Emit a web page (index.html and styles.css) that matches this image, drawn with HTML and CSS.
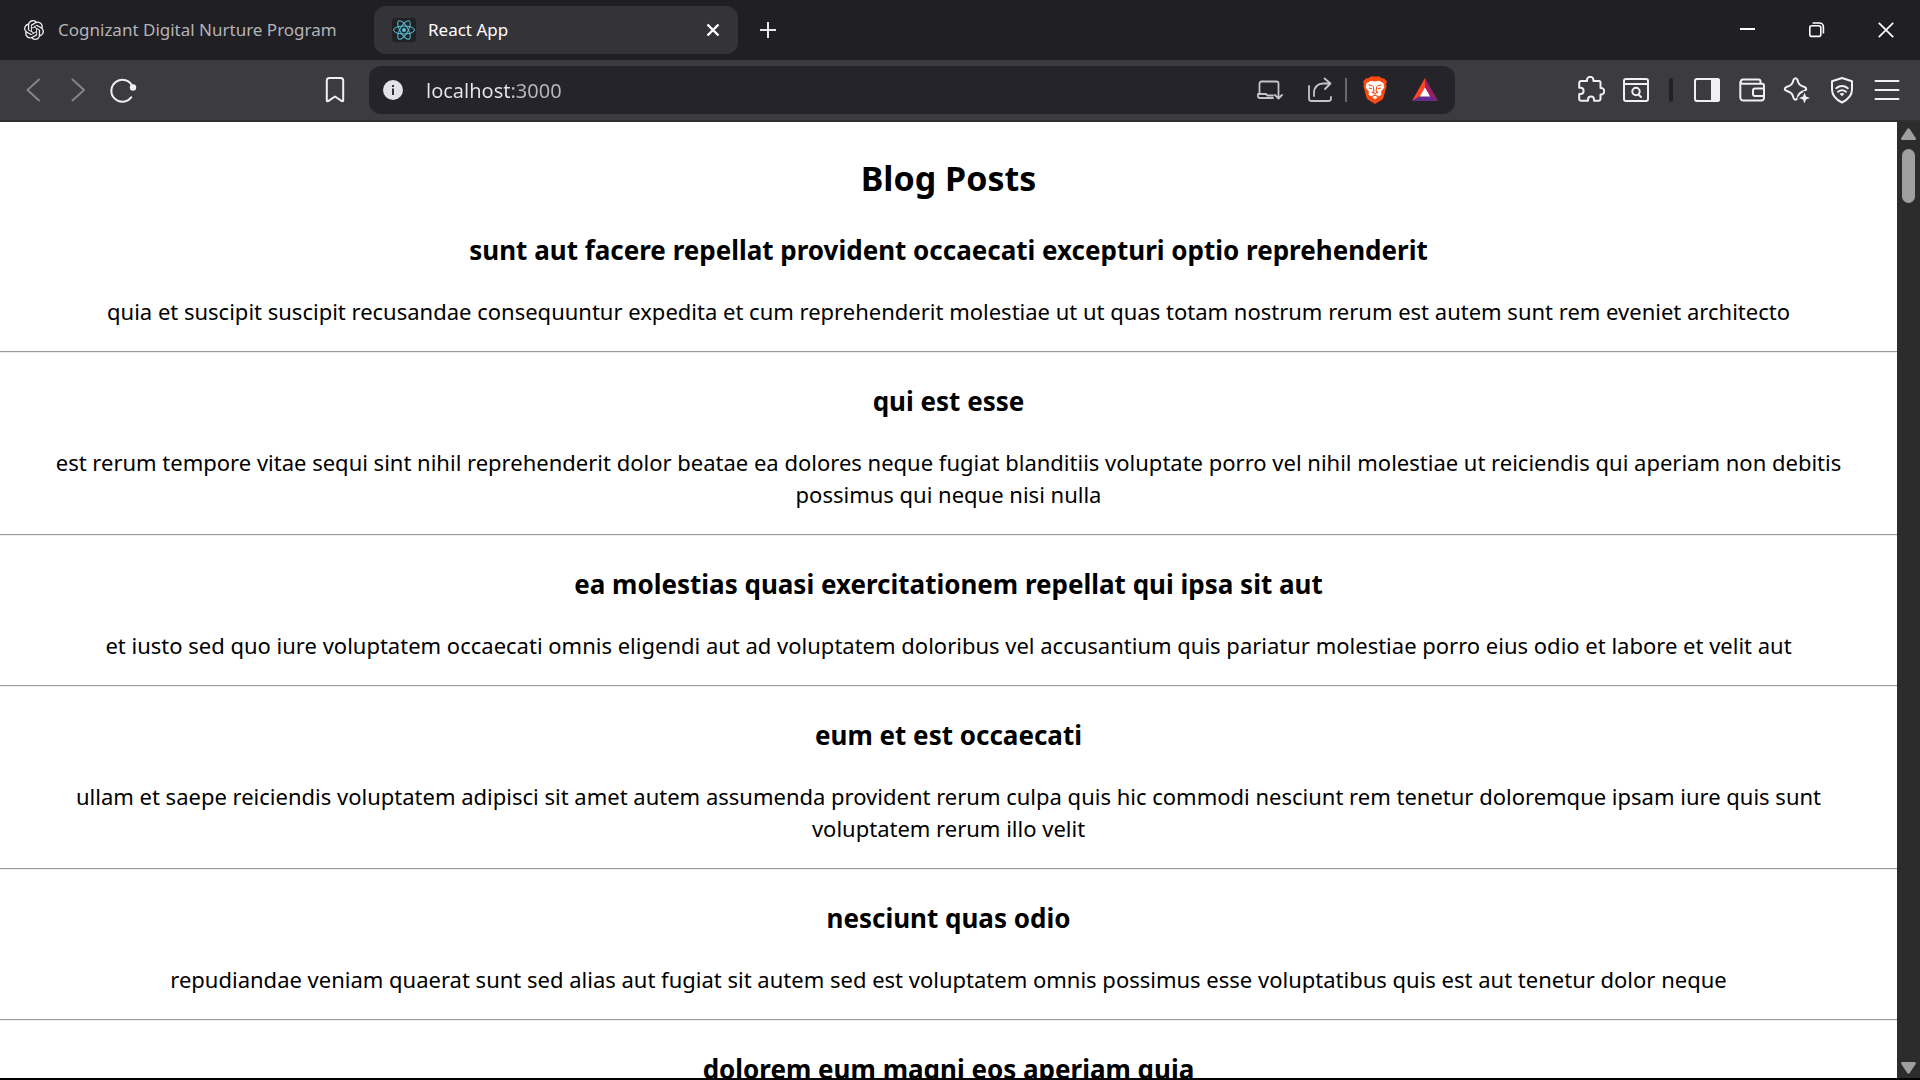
FILE: index.html
```html
<!DOCTYPE html>
<html lang="en">
<head>
<meta charset="utf-8">
<title>React App</title>
<link rel="stylesheet" href="styles.css">
</head>
<body>
<div class="window">
  <header class="tab-strip">
    <div class="tab">
      <svg class="favicon" viewBox="0 0 24 24" width="20" height="20" fill="#f0f0f0"><path d="M22.2819 9.8211a5.9847 5.9847 0 0 0-.5157-4.9108 6.0462 6.0462 0 0 0-6.5098-2.9A6.0651 6.0651 0 0 0 4.9807 4.1818a5.9847 5.9847 0 0 0-3.9977 2.9 6.0462 6.0462 0 0 0 .7427 7.0966 5.98 5.98 0 0 0 .511 4.9107 6.051 6.051 0 0 0 6.5146 2.9001A5.9847 5.9847 0 0 0 13.2599 24a6.0557 6.0557 0 0 0 5.7718-4.2058 5.9894 5.9894 0 0 0 3.9977-2.9001 6.0557 6.0557 0 0 0-.7475-7.073zm-9.022 12.6081a4.4755 4.4755 0 0 1-2.8764-1.0408l.1419-.0804 4.7783-2.7582a.7948.7948 0 0 0 .3927-.6813v-6.7369l2.02 1.1686a.071.071 0 0 1 .038.052v5.5826a4.504 4.504 0 0 1-4.4945 4.4944zm-9.6607-4.1254a4.4708 4.4708 0 0 1-.5346-3.0137l.142.0852 4.783 2.7582a.7712.7712 0 0 0 .7806 0l5.8428-3.3685v2.3324a.0804.0804 0 0 1-.0332.0615L9.74 19.9502a4.4992 4.4992 0 0 1-6.1408-1.6464zM2.3408 7.8956a4.485 4.485 0 0 1 2.3655-1.9728V11.6a.7664.7664 0 0 0 .3879.6765l5.8144 3.3543-2.0201 1.1685a.0757.0757 0 0 1-.071 0l-4.8303-2.7865A4.504 4.504 0 0 1 2.3408 7.872zm16.5963 3.8558L13.1038 8.364 15.1192 7.2a.0757.0757 0 0 1 .071 0l4.8303 2.7913a4.4944 4.4944 0 0 1-.6765 8.1042v-5.6772a.79.79 0 0 0-.407-.667zm2.0107-3.0231l-.142-.0852-4.7735-2.7818a.7759.7759 0 0 0-.7854 0L9.409 9.2297V6.8974a.0662.0662 0 0 1 .0284-.0615l4.8303-2.7866a4.4992 4.4992 0 0 1 6.6802 4.66zM8.3065 12.863l-2.02-1.1638a.0804.0804 0 0 1-.038-.0567V6.0742a4.4992 4.4992 0 0 1 7.3757-3.4537l-.142.0805L8.704 5.459a.7948.7948 0 0 0-.3927.6813zm1.0976-2.3654l2.602-1.4998 2.6069 1.4998v2.9994l-2.5974 1.4997-2.6067-1.4997Z"/></svg>
      <span class="tab-label">Cognizant Digital Nurture Program</span>
    </div>
    <div class="tab tab-active">
      <svg class="favicon" viewBox="0 0 24 24" width="24" height="24" fill="none" stroke="#58c4dc" stroke-width="1"><rect width="24" height="24" rx="3" fill="#222224" stroke="none"/><ellipse cx="12" cy="12" rx="10.5" ry="4"/><ellipse cx="12" cy="12" rx="10.5" ry="4" transform="rotate(60 12 12)"/><ellipse cx="12" cy="12" rx="10.5" ry="4" transform="rotate(120 12 12)"/><circle cx="12" cy="12" r="2" fill="#58c4dc" stroke="none"/></svg>
      <span class="tab-label">React App</span>
      <button class="tab-close" aria-label="Close tab"><svg viewBox="0 0 14 14" width="14" height="14" fill="none" stroke="#fff" stroke-width="2.4"><path d="M1.5 1.5l11 11M12.5 1.5l-11 11"/></svg></button>
    </div>
    <button class="new-tab" aria-label="New tab"><svg viewBox="0 0 16 16" width="16" height="16" fill="none" stroke="#e8e8ec" stroke-width="2"><path d="M8 0v16M0 8h16"/></svg></button>
    <div class="window-controls">
      <button class="window-button" aria-label="Minimize"><svg viewBox="0 0 16 16" width="16" height="16" fill="none" stroke="#fff" stroke-width="2"><path d="M0 7h15"/></svg></button>
      <button class="window-button" aria-label="Restore"><svg viewBox="0 0 16 16" width="16" height="16" fill="none" stroke="#fff" stroke-width="1.6"><rect x="0.8" y="3.8" width="11" height="10.6" rx="2"/><path d="M3.6 1h6.8a4 4 0 0 1 4 4v6.6"/></svg></button>
      <button class="window-button" aria-label="Close"><svg viewBox="0 0 16 16" width="16" height="16" fill="none" stroke="#fff" stroke-width="1.7"><path d="M.8.8l14.400 14.400M15.200.8L.8 15.200"/></svg></button>
    </div>
  </header>

  <nav class="toolbar">
    <button class="tool tool-dim" aria-label="Back"><svg class="icon" viewBox="0 0 28 28"><path d="M20 3.500L8.500 14 20 24.500"/></svg></button>
    <button class="tool tool-dim" aria-label="Forward"><svg class="icon" viewBox="0 0 28 28"><path d="M8.500 3.500L20 14 8.500 24.500"/></svg></button>
    <button class="tool" aria-label="Reload"><svg class="icon" viewBox="0 0 28 28"><path d="M23.500 10.500A11 11 0 1 0 22.300 21.200"/><circle cx="24" cy="11.500" r="3.200" fill="currentColor" stroke="none"/></svg></button>
    <button class="tool bookmark" aria-label="Bookmark"><svg class="icon" viewBox="0 0 28 28"><path d="M5.800 4.500a2.500 2.500 0 0 1 2.500-2.500h11.400a2.500 2.500 0 0 1 2.500 2.500v20c0 .8-.8 1.100-1.400.6L14 20.500l-6.800 4.600c-.6.500-1.400.2-1.400-.6z"/></svg></button>

    <div class="address">
      <button class="site-info" aria-label="Site information"><svg viewBox="0 0 20 20" width="20" height="20"><circle cx="10" cy="10" r="10" fill="#e2e2e8"/><path d="M9 5h2v2H9zM9 8.600h2V15H9z" fill="#35343a"/></svg></button>
      <input class="url" type="text" value="localhost:3000" aria-label="Address">
      <button class="address-tool" aria-label="Install app"><svg class="icon" viewBox="0 0 28 28"><path d="M3.500 18V7.500a2 2 0 0 1 2-2h15a2 2 0 0 1 2 2V13M2 18h8l1.500 1.500H17M2 18v2a2 2 0 0 0 2 2h13M22.500 14v8M19 19l3.500 3.500L26 19" stroke-width="1.800"/></svg></button>
      <button class="address-tool" aria-label="Share"><svg class="icon" viewBox="0 0 28 28"><path d="M3 10v12.500a2.500 2.500 0 0 0 2.500 2.500h17a2.500 2.500 0 0 0 2.500-2.500V21M8 20v-3c0-6 4-9.500 9-9.500h7.500M18.500 2.500l6 5-5.500 5.500" stroke-width="1.800"/></svg></button>
      <span class="address-divider"></span>
      <button class="address-tool" aria-label="Brave Shields"><svg viewBox="0 0 28 28" width="28" height="28"><path d="M7 2.500L9.500.500h9L21 2.500l2-.3 3 3.500-1 2.300.6 2-3 11.300c-.4 1.300-1 2-2 2.700L14 28l-6.600-4c-1-.7-1.600-1.400-2-2.700L2.400 10l.6-2-1-2.300 3-3.500z" fill="#fb4a10"/><path d="M14 5.500l-4-.8-4.500 2.600-.8 4.200 3.300 4.200-.5 3 3 1.800 3.500 3 3.500-3 3-1.800-.5-3 3.300-4.200-.8-4.200L18 4.700z" fill="#fff"/><path d="M7.500 8.800l4 1.200M20.500 8.800l-4 1.200M8 12l3 .8M20 12l-3 .8M12.300 10.500l.6 4.500-1.500 1.500 2.600 1 2.600-1-1.500-1.500.6-4.500M10.500 21l3.500-2 3.500 2" fill="none" stroke="#fb4a10" stroke-width="1.100"/></svg></button>
      <button class="address-tool" aria-label="Brave Rewards"><svg viewBox="0 0 28 28" width="28" height="28"><path d="M14 2L1 25l8-4.500L14 12z" fill="#ff4724"/><path d="M14 2l13 23-8-4.500L14 12z" fill="#9e1f63"/><path d="M1 25h26l-8-5H9z" fill="#662d91"/><path d="M14 11.500L19.200 20.500H8.800z" fill="#fff"/></svg></button>
    </div>

    <button class="tool" aria-label="Extensions"><svg class="icon" viewBox="0 0 28 28"><path d="M4 5h6V4a3.200 3.200 0 0 1 6.400 0v1H22a1.500 1.500 0 0 1 1.500 1.500V12h.6a3.200 3.200 0 0 1 0 6.400h-.6V23a1.800 1.800 0 0 1-1.800 1.800H17v-1.300a3 3 0 0 0-6 0v1.300H4A1.800 1.800 0 0 1 2.200 23v-5h1.300a3.100 3.100 0 0 0 0-6.200H2.200V7A2 2 0 0 1 4 5z"/></svg></button>
    <button class="tool" aria-label="Search tabs"><svg class="icon" viewBox="0 0 28 28"><rect x="2" y="3" width="24" height="22" rx="2"/><path d="M2 8h24"/><circle cx="14" cy="15.500" r="3.700"/><path d="M16.500 18.500l2.500 2.500"/></svg></button>
    <span class="toolbar-divider"></span>
    <button class="tool" aria-label="Sidebar"><svg class="icon" viewBox="0 0 28 28"><rect x="2" y="3" width="24" height="22" rx="2"/><path d="M19 3h5a2 2 0 0 1 2 2v18a2 2 0 0 1-2 2h-5z" fill="currentColor"/></svg></button>
    <button class="tool" aria-label="Wallet"><svg class="icon" viewBox="0 0 28 28"><path d="M22.500 7V5.500a2 2 0 0 0-2-2H4.500a2.200 2.200 0 0 0 0 4.300H24a2 2 0 0 1 2 2V22a2.500 2.500 0 0 1-2.500 2.500h-18A3 3 0 0 1 2.300 21.500V6M26 12.500h-9a2 2 0 0 0-2 2V18a2 2 0 0 0 2 2h9"/></svg></button>
    <button class="tool" aria-label="Leo AI"><svg class="icon" viewBox="0 0 28 28"><path d="M10.500 4c.7-2.500 3.300-2.500 4 0 1 4 1.800 5.200 7 7 2.300.8 2.300 3 0 3.800-5 1.700-6 3-7 7-.7 2.500-3.300 2.500-4 0-1-4-2-5.300-7-7-2.300-.8-2.300-3 0-3.800 5-1.800 6-3 7-7z"/><path d="M21.500 16.500l1.500 4 4 1.500-4 1.500-1.500 4-1.500-4-4-1.500 4-1.500z" fill="currentColor" stroke="#3c3b40" stroke-width="3" paint-order="stroke"/></svg></button>
    <button class="tool" aria-label="VPN"><svg class="icon" viewBox="0 0 28 28"><path d="M14 2l10 3.200v8.300c0 6-3.500 9.800-10 13-6.500-3.200-10-7-10-13V5.200zM8.200 12.200c3.500-2.800 8.100-2.800 11.600 0M10 15.700c2.500-1.900 5.500-1.900 8 0"/><path d="M11.500 17.800c1.500-1 3.500-1 5 0L14 20.300z" fill="currentColor" stroke="none"/></svg></button>
    <button class="tool" aria-label="Menu"><svg class="icon" viewBox="0 0 28 28"><path d="M2.500 5h23M2.500 14h23M2.500 23h23"/></svg></button>
  </nav>

  <div class="viewport">
    <main class="page">
      <h1 class="page-title">Blog Posts</h1>
      <article class="post">
        <h2 class="post-title">sunt aut facere repellat provident occaecati excepturi optio reprehenderit</h2>
        <p class="post-body">quia et suscipit suscipit recusandae consequuntur expedita et cum reprehenderit molestiae ut ut quas totam nostrum rerum est autem sunt rem eveniet architecto</p>
      </article>
      <article class="post">
        <h2 class="post-title">qui est esse</h2>
        <p class="post-body">est rerum tempore vitae sequi sint nihil reprehenderit dolor beatae ea dolores neque fugiat blanditiis voluptate porro vel nihil molestiae ut reiciendis qui aperiam non debitis possimus qui neque nisi nulla</p>
      </article>
      <article class="post">
        <h2 class="post-title">ea molestias quasi exercitationem repellat qui ipsa sit aut</h2>
        <p class="post-body">et iusto sed quo iure voluptatem occaecati omnis eligendi aut ad voluptatem doloribus vel accusantium quis pariatur molestiae porro eius odio et labore et velit aut</p>
      </article>
      <article class="post">
        <h2 class="post-title">eum et est occaecati</h2>
        <p class="post-body">ullam et saepe reiciendis voluptatem adipisci sit amet autem assumenda provident rerum culpa quis hic commodi nesciunt rem tenetur doloremque ipsam iure quis sunt voluptatem rerum illo velit</p>
      </article>
      <article class="post">
        <h2 class="post-title">nesciunt quas odio</h2>
        <p class="post-body">repudiandae veniam quaerat sunt sed alias aut fugiat sit autem sed est voluptatem omnis possimus esse voluptatibus quis est aut tenetur dolor neque</p>
      </article>
      <article class="post">
        <h2 class="post-title">dolorem eum magni eos aperiam quia</h2>
      </article>
    </main>
    <div class="scrollbar">
      <svg viewBox="0 0 15 12" width="15" height="12" fill="#9f9f9f"><path d="M6.300 1c.6-.9 1.800-.9 2.400 0l6 9c.5.900 0 2-1.200 2h-12C.3 12-.2 10.900.3 10z"/></svg>
      <span class="scroll-thumb"></span>
      <svg viewBox="0 0 15 12" width="15" height="12" fill="#9f9f9f"><path d="M6.300 11c.6.900 1.800.9 2.400 0l6-9c.5-.9 0-2-1.200-2h-12C.3 0-.2 1.100.3 2z"/></svg>
    </div>
  </div>
</div>
</body>
</html>
```
FILE: styles.css
```css
* {
  box-sizing: border-box;
}

body {
  margin: 0;
  font-family: "Noto Sans", "Open Sans", sans-serif;
}

button {
  display: flex;
  align-items: center;
  justify-content: center;
  padding: 0;
  border: 0;
  background: none;
  color: inherit;
}

.window {
  display: flex;
  flex-direction: column;
  height: 100vh;
  overflow: hidden;
  border-bottom: 2px solid #000;
}

/* Tab strip */
.tab-strip {
  display: flex;
  flex: none;
  align-items: center;
  height: 60px;
  padding-left: 6px;
  background: #201f24;
}

.tab {
  display: flex;
  align-items: center;
  width: 364px;
  height: 48px;
  padding: 0 18px;
  gap: 14px;
  border-radius: 12px;
  color: #b4b4b8;
  font-size: 17px;
  white-space: nowrap;
}

.tab-active {
  margin-left: 4px;
  gap: 12px;
  background: #343338;
  color: #fff;
}

.tab-label {
  padding-bottom: 2px;
}

.favicon {
  flex: none;
}

.tab-close {
  margin-left: auto;
}

.new-tab {
  width: 60px;
  height: 48px;
}

.window-controls {
  display: flex;
  margin-left: auto;
}

.window-button {
  width: 69px;
  height: 48px;
}

/* Toolbar */
.toolbar {
  display: flex;
  flex: none;
  align-items: center;
  height: 62px;
  padding: 0 11px 0 10px;
  border-bottom: 2px solid #2f2e33;
  background: #3c3b40;
  color: #f0f0f4;
}

.tool {
  flex: none;
  width: 45px;
  height: 48px;
}

.tool-dim {
  color: #858489;
}

.bookmark {
  margin-left: 167px;
}

.icon {
  width: 28px;
  height: 28px;
  fill: none;
  stroke: currentColor;
  stroke-width: 2;
  stroke-linecap: round;
  stroke-linejoin: round;
}

.toolbar-divider {
  flex: none;
  width: 4px;
  height: 24px;
  margin: 0 11px;
  border-radius: 2px;
  background: #222126;
}

.address {
  display: flex;
  flex: 1;
  align-items: center;
  height: 48px;
  margin: 0 113px 0 12px;
  padding: 0 5px 0 14px;
  border-radius: 12px;
  background: #25242a;
  color: #c4c4ca;
}

.url {
  flex: 1;
  min-width: 0;
  height: 40px;
  margin-left: 23px;
  padding: 0;
  border: 0;
  outline: 0;
  background: linear-gradient(to right, #e6e6ea 86px, #b8b8be 86px);
  background-clip: text;
  color: transparent;
  font: inherit;
  font-size: 20px;
}

.address-tool {
  width: 50px;
  height: 40px;
}

.address-divider {
  width: 2px;
  height: 24px;
  margin-right: 3px;
  background: #6a696f;
}

/* Page and scrollbar */
.viewport {
  display: flex;
  flex: 1;
  min-height: 0;
  background: #fff;
}

.page {
  flex: 1;
  overflow: hidden;
  color: #000;
  text-align: center;
}

.page-title {
  margin: 32px 0 28px;
  font-size: 34px;
  line-height: 48px;
}

.post {
  border-bottom: 2px groove #e8e8e8;
}

.post-title {
  margin: 0;
  padding: 30px 0 26px;
  font-size: 26px;
  line-height: 37px;
}

.page-title + .post .post-title {
  padding-top: 2px;
}

.post-body {
  margin: 0;
  padding: 0 24px 24px;
  font-size: 22px;
  line-height: 32px;
}

.post {
  border-bottom: 1px solid #9a9a9a;
  box-shadow: 0 1px #eee;
  margin-bottom: 1px;
}

.scrollbar {
  display: flex;
  flex: none;
  flex-direction: column;
  align-items: center;
  width: 23px;
  padding: 6px 0 4px;
  background: #2c2c2c;
}

.scroll-thumb {
  width: 13px;
  height: 54px;
  margin: 9px 0 auto;
  border-radius: 7px;
  background: #9f9f9f;
}
```
